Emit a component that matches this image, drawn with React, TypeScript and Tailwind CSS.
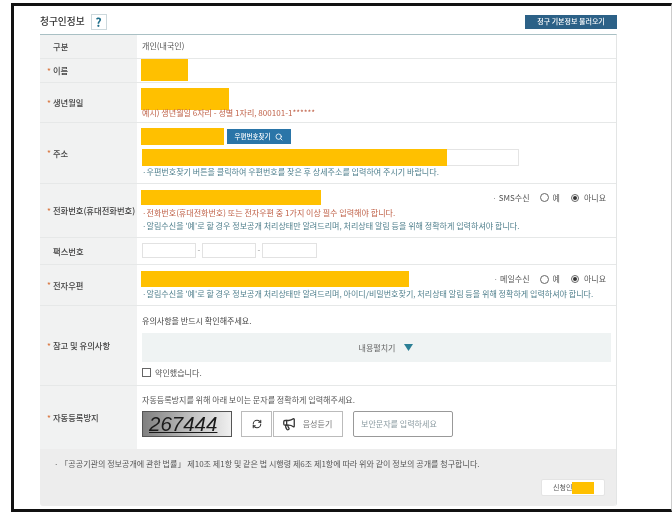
import type { ReactNode } from "react";
import { Search, RefreshCw, Megaphone } from "lucide-react";

const Y = "bg-[#ffc000]";

function Row({ label, star = true, h, border = true, children }: { label: string; star?: boolean; h: string; border?: boolean; children: ReactNode }) {
  return (
    <div className={`flex ${h} ${border ? "border-b border-[#e6e8e8]" : ""}`}>
      <div className="w-[97px] shrink-0 bg-[#f1f2f2] flex items-center pl-[7px] font-medium text-[8.3px] text-[#444] whitespace-nowrap">
        {star ? <span className="text-[#d9743c] mr-[2px] text-[8px]">*</span> : <span className="w-[6px]" />}
        <span>{label}</span>
      </div>
      <div className="flex-1 min-w-0 pl-[5px] pr-[5px] flex flex-col">{children}</div>
    </div>
  );
}

function Radios({ label }: { label: string }) {
  return (
    <div className="flex items-center text-[8px] text-[#555] shrink-0">
      <span className="text-[#888] mr-[2px]">·</span>
      <span>{label}</span>
      <span className="ml-[10px] w-[9px] h-[9px] rounded-full border border-[#666]" />
      <span className="ml-[4px]">예</span>
      <span className="ml-[11px] w-[8px] h-[8px] rounded-full border border-[#666] flex items-center justify-center">
        <span className="w-[4px] h-[4px] rounded-full bg-[#333]" />
      </span>
      <span className="ml-[5px]">아니요</span>
    </div>
  );
}

export default function App() {
  return (
    <div className="w-[672px] h-[515px] bg-white overflow-hidden pt-[3px] font-['Noto_Sans_CJK_KR','Noto_Sans',sans-serif] leading-none blur-[0.3px]">
      <div className="ml-[11px] w-[661px] h-[509px] border-t-[3px] border-l-[3px] border-b-[3px] border-[#111] border-r border-r-[#ccc] pl-[26px] pr-[54px]">
        <div className="flex items-center justify-between h-[28px] pt-[3px]">
          <div className="flex items-center">
            <h1 className="text-[9.7px] font-medium text-[#333]">청구인정보</h1>
            <span className="ml-[6px] w-[16px] h-[16px] border border-[#ccd8dc] flex items-center justify-center text-[12px] font-bold text-[#1f6f8b]">?</span>
          </div>
          <button className="w-[92px] h-[14px] bg-[#2c6187] text-white text-[7px] font-medium flex items-center justify-center">청구 기본정보 불러오기</button>
        </div>
        <div className="border-t border-t-[#a9c0c4] border-r border-r-[#e3e5e5] rounded-br-[3px] text-[#555] text-[8.05px]">
          <Row label="구분" star={false} h="h-[24px]">
            <div className="flex-1 flex items-center">개인(내국인)</div>
          </Row>
          <Row label="이름" h="h-[24px]">
            <div className={`${Y} w-[47px] h-[22px] -ml-px`} />
          </Row>
          <Row label="생년월일" h="h-[40px]">
            <div className={`${Y} w-[88px] h-[22px] mt-[5px] -ml-px`} />
            <div className="text-[#c0634a] mt-[-1px]">예시) 생년월일 6자리 - 성별 1자리, 800101-1******</div>
          </Row>
          <Row label="주소" h="h-[61px]">
            <div className="flex items-center mt-[5px] -ml-px">
              <div className={`${Y} w-[83px] h-[17px]`} />
              <button className="ml-[3px] w-[64px] h-[15px] bg-[#2a75a8] text-white text-[6.5px] font-medium flex items-center justify-center gap-[5px]">
                우편번호찾기 <Search size={8} strokeWidth={2.5} />
              </button>
            </div>
            <div className="mt-[4px] w-[377px] h-[17px] border border-[#e4e4e4]">
              <div className={`${Y} w-[305px] h-[17px] -mt-px -ml-px`} />
            </div>
            <div className="mt-[2px] text-[#4f7f8c]">·우편번호찾기 버튼을 클릭하여 우편번호를 찾은 후 상세주소를 입력하여 주시기 바랍니다.</div>
          </Row>
          <Row label="전화번호(휴대전화번호)" h="h-[54px]">
            <div className="flex items-center justify-between mt-[6px] pr-[5px] -ml-px">
              <div className={`${Y} w-[180px] h-[15px]`} />
              <Radios label="SMS수신" />
            </div>
            <div className="mt-[4px] text-[#c0634a]">·전화번호(휴대전화번호) 또는 전자우편 중 1가지 이상 필수 입력해야 합니다.</div>
            <div className="mt-[5px] text-[#4f7f8c]">·알림수신을 '예'로 할 경우 정보공개 처리상태만 알려드리며, 처리상태 알림 등을 위해 정확하게 입력하셔야 합니다.</div>
          </Row>
          <Row label="팩스번호" star={false} h="h-[27px]">
            <div className="flex items-center mt-[5px] text-[#999]">
              <div className="w-[54px] h-[15px] border border-[#e2e2e2]" />
              <span className="w-[6px] text-center">-</span>
              <div className="w-[54px] h-[15px] border border-[#e2e2e2]" />
              <span className="w-[6px] text-center">-</span>
              <div className="w-[55px] h-[15px] border border-[#e2e2e2]" />
            </div>
          </Row>
          <Row label="전자우편" h="h-[41px]">
            <div className="flex items-center justify-between mt-[6px] pr-[5px] -ml-px">
              <div className={`${Y} w-[268px] h-[16px]`} />
              <Radios label="메일수신" />
            </div>
            <div className="mt-[3px] text-[#4f7f8c] whitespace-nowrap">·알림수신을 '예'로 할 경우 정보공개 처리상태만 알려드리며, 아이디/비밀번호찾기, 처리상태 알림 등을 위해 정확하게 입력하셔야 합니다.</div>
          </Row>
          <Row label="참고 및 유의사항" h="h-[80px]">
            <div className="mt-[11px] text-[#444]">유의사항을 반드시 확인해주세요.</div>
            <div className="mt-[8px] h-[29px] bg-[#eff3f3] flex items-center justify-center text-[#666] pl-[18px]">
              내용펼치기
              <svg width="9" height="7" viewBox="0 0 9 7" className="ml-[8px]"><path d="M0 0h9L4.5 7z" fill="#2b7f95" /></svg>
            </div>
            <label className="mt-[6px] flex items-center text-[#555]">
              <span className="w-[9px] h-[9px] border border-[#666] mr-[4px]" />약인했습니다.
            </label>
          </Row>
          <Row label="자동등록방지" h="h-[63px]" border={false}>
            <div className="mt-[10px] text-[#555]">자동등록방지를 위해 아래 보이는 문자를 정확하게 입력해주세요.</div>
            <div className="flex items-stretch mt-[7px] h-[26px]">
              <div className="w-[90px] border border-[#555] bg-gradient-to-r from-[#808080] via-[#bbb] to-[#f0f0f0] flex items-center pl-[6px]">
                <span className="font-['Liberation_Sans',sans-serif] italic text-[20.5px] text-[#1a1a1a] underline decoration-1 underline-offset-1">267444</span>
              </div>
              <div className="ml-[9px] w-[31px] border border-[#bbb] flex items-center justify-center">
                <RefreshCw size={10} strokeWidth={2.5} className="text-[#333]" />
              </div>
              <div className="ml-px w-[70px] border border-[#bbb] flex items-center justify-center text-[#777] gap-[7px] pr-[2px]">
                <Megaphone size={14} strokeWidth={2.2} className="text-[#333]" />음성듣기
              </div>
              <div className="ml-[10px] w-[100px] border border-[#999] rounded-[2px] flex items-center pl-[7px] text-[#8a9aa0]">보안문자를 입력하세요</div>
            </div>
          </Row>
          <div className="h-[57px] bg-[#ededed] pt-[11px] pl-[14px] pr-[11px] rounded-b-[3px]">
            <div className="text-[#555]">· 「공공기관의 정보공개에 관한 법률」 제10조 제1항 및 같은 법 시행령 제6조 제1항에 따라 위와 같이 정보의 공개를 청구합니다.</div>
            <div className="flex justify-end mt-[11px]">
              <div className="w-[64px] h-[17px] bg-white border border-[#e4e4e4] rounded-[2px] flex items-center pl-[11px] text-[7px] text-[#555]">
                신청인<span className={`${Y} w-[22px] h-[12px] inline-block`} />
              </div>
            </div>
          </div>
        </div>
      </div>
    </div>
  );
}
